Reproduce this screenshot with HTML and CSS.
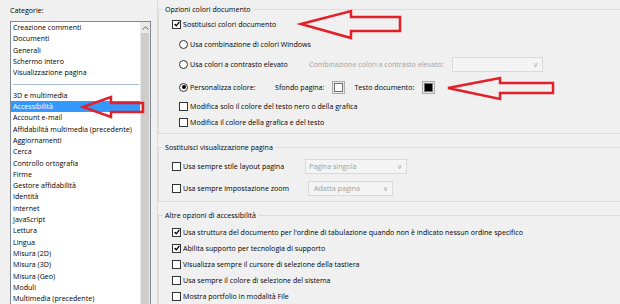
FILE: index.html
```html
<!DOCTYPE html>
<html>

<head>
    <title>Preferenze - Accessibilità</title>
    <link rel="stylesheet" href="styles.css">
</head>

<body>
    <div class="window">
        <div class="sidebar">
            <div class="sidebar-label">Categorie:</div>
            <div class="listbox">
                <ul class="list">
                    <li>Creazione commenti</li>
                    <li>Documenti</li>
                    <li>Generali</li>
                    <li>Schermo intero</li>
                    <li>Visualizzazione pagina</li>
                    <li class="separator"></li>
                    <li>3D e multimedia</li>
                    <li class="selected">Accessibilità</li>
                    <li>Account e-mail</li>
                    <li>Affidabilità multimedia (precedente)</li>
                    <li>Aggiornamenti</li>
                    <li>Cerca</li>
                    <li>Controllo ortografia</li>
                    <li>Firme</li>
                    <li>Gestore affidabilità</li>
                    <li>Identità</li>
                    <li>Internet</li>
                    <li>JavaScript</li>
                    <li>Lettura</li>
                    <li>Lingua</li>
                    <li>Misura (2D)</li>
                    <li>Misura (3D)</li>
                    <li>Misura (Geo)</li>
                    <li>Moduli</li>
                    <li>Multimedia (precedente)</li>
                </ul>
                <div class="scrollbar">
                    <div class="scroll-up">
                        <svg width="7" height="4" viewBox="0 0 7 4"><polyline points="0.5,3.5 3.5,0.8 6.5,3.5" fill="none" stroke="#606060" stroke-width="1"/></svg>
                    </div>
                    <div class="scroll-thumb"></div>
                </div>
            </div>
        </div>

        <div class="content">
            <fieldset class="group group-colors">
                <legend>Opzioni colori documento</legend>
                <div class="row">
                    <span class="check checked"><svg width="6" height="6" viewBox="0 0 6 6"><polyline points="0.6,3 2.3,4.8 5.4,0.8" fill="none" stroke="#000" stroke-width="1.3"/></svg></span>
                    <span>Sostituisci colori documento</span>
                </div>
                <div class="row indent gap-4">
                    <span class="radio"></span>
                    <span>Usa combinazione di colori Windows</span>
                </div>
                <div class="row indent gap-4">
                    <div class="option option-contrast">
                        <span class="radio"></span>
                        <span>Usa colori a contrasto elevato</span>
                    </div>
                    <span class="disabled label-contrast">Combinazione colori a contrasto elevato:</span>
                    <div class="dropdown dropdown-contrast"><span></span><span class="chevron">&#x2228;</span></div>
                </div>
                <div class="row indent gap-7">
                    <div class="option option-custom">
                        <span class="radio checked"></span>
                        <span>Personalizza colore:</span>
                    </div>
                    <span>Sfondo pagina:</span>
                    <span class="swatch swatch-page"><span class="swatch-inner swatch-white"></span></span>
                    <span>Testo documento:</span>
                    <span class="swatch swatch-text"><span class="swatch-inner swatch-black"></span></span>
                </div>
                <div class="row indent gap-3">
                    <span class="check"></span>
                    <span>Modifica solo il colore del testo nero o della grafica</span>
                </div>
                <div class="row indent">
                    <span class="check"></span>
                    <span>Modifica il colore della grafica e del testo</span>
                </div>
            </fieldset>

            <fieldset class="group group-view">
                <legend>Sostituisci visualizzazione pagina</legend>
                <div class="row">
                    <div class="option option-layout">
                        <span class="check"></span>
                        <span>Usa sempre stile layout pagina</span>
                    </div>
                    <div class="dropdown dropdown-layout"><span>Pagina singola</span><span class="chevron">&#x2228;</span></div>
                </div>
                <div class="row gap-6">
                    <div class="option option-zoom">
                        <span class="check"></span>
                        <span>Usa sempre impostazione zoom</span>
                    </div>
                    <div class="dropdown dropdown-zoom"><span>Adatta pagina</span><span class="chevron">&#x2228;</span></div>
                </div>
            </fieldset>

            <fieldset class="group group-other">
                <legend>Altre opzioni di accessibilità</legend>
                <div class="row">
                    <span class="check checked"><svg width="6" height="6" viewBox="0 0 6 6"><polyline points="0.6,3 2.3,4.8 5.4,0.8" fill="none" stroke="#000" stroke-width="1.3"/></svg></span>
                    <span>Usa struttura del documento per l'ordine di tabulazione quando non è indicato nessun ordine specifico</span>
                </div>
                <div class="row">
                    <span class="check checked"><svg width="6" height="6" viewBox="0 0 6 6"><polyline points="0.6,3 2.3,4.8 5.4,0.8" fill="none" stroke="#000" stroke-width="1.3"/></svg></span>
                    <span>Abilita supporto per tecnologia di supporto</span>
                </div>
                <div class="row">
                    <span class="check"></span>
                    <span>Visualizza sempre il cursore di selezione della tastiera</span>
                </div>
                <div class="row">
                    <span class="check"></span>
                    <span>Usa sempre il colore di selezione del sistema</span>
                </div>
                <div class="row">
                    <span class="check"></span>
                    <span>Mostra portfolio in modalità File</span>
                </div>
            </fieldset>
        </div>

        <!-- red arrows drawn over the screenshot -->
        <svg class="annotations" width="620" height="304" viewBox="0 0 620 304">
            <polygon points="301,24 351,11 351,17 400,17 400,31 351,31 351,38" />
            <polygon points="448,88 500,78 500,83 553,83 553,93 500,93 500,99" />
            <polygon points="83,107 111,97 111,103 143,103 143,112 111,112 111,117" />
        </svg>
    </div>
</body>

</html>
```

FILE: styles.css
```css
/* General */
html,
body {
    margin: 0;
    height: 100%;
    overflow: hidden;
}

* {
    box-sizing: border-box;
}

body {
    background-color: #f0f0f0;
    color: #000;
    font-family: "Open Sans", "Noto Sans", sans-serif;
    font-size: 7.1px;
}

.window {
    position: relative;
    display: flex;
    height: 304px;
    overflow: hidden;
}

/* Categories list */
.sidebar {
    width: 151px;
    padding-left: 10px;
    flex-shrink: 0;
    display: flex;
    flex-direction: column;
}

.sidebar-label {
    padding-top: 4px;
    line-height: 12px;
    margin-bottom: 5px;
}

.listbox {
    flex: 1;
    min-height: 0;
    overflow: hidden;
    display: flex;
    background: #fff;
    border: 1px solid #828790;
    border-bottom: 0;
}

.list {
    list-style: none;
    margin: 0;
    padding: 0;
    flex: 1;
}

.list li {
    height: 11.31px;
    line-height: 11.31px;
    padding-left: 2px;
    white-space: nowrap;
}

.list li.selected {
    background: #3399ff;
    color: #fff;
}

.list li.separator {
    position: relative;
}

.list li.separator::after {
    content: "";
    position: absolute;
    left: 2px;
    right: 1px;
    top: 6px;
    border-top: 1px solid #a7bcd3;
}

.scrollbar {
    width: 10px;
    background: #e8e8e8;
    display: flex;
    flex-direction: column;
}

.scroll-up {
    height: 11px;
    display: flex;
    align-items: center;
    justify-content: center;
}

.scroll-up svg {
    display: block;
}

.scroll-thumb {
    flex: 1;
    margin: 0 1px;
    background: #cdcdcd;
}

/* Options panel */
.content {
    flex: 1;
    margin-left: 6px;
    margin-right: -20px;
    border-left: 1px solid #dcdcdc;
    overflow: hidden;
}

.group {
    margin: 0;
    border: 1px solid #dcdcdc;
    padding: 0 0 0 13px;
}

.group legend {
    margin-left: -9px;
    padding: 0 2px;
    line-height: 12px;
}

.group-colors {
    margin-top: 3px;
    padding-top: 1px;
    padding-bottom: 3px;
}

.group-view {
    margin-top: 7px;
    padding-top: 5px;
    padding-bottom: 5px;
}

.group-other {
    margin-top: 7px;
    padding-top: 3px;
    padding-bottom: 0;
}

.row {
    display: flex;
    align-items: center;
    height: 16px;
    white-space: nowrap;
}

.row.indent {
    margin-left: 7px;
}

.gap-3 {
    margin-top: 3px;
}

.gap-4 {
    margin-top: 4px;
}

.gap-6 {
    margin-top: 6px;
}

.gap-7 {
    margin-top: 7px;
}

.option {
    display: flex;
    align-items: center;
    flex-shrink: 0;
}

.option-contrast {
    width: 130px;
}

.option-custom {
    width: 96px;
}

.option-layout {
    width: 133px;
}

.option-zoom {
    width: 136px;
}

/* Check boxes and radio buttons */
.check {
    width: 9px;
    height: 9px;
    border: 1px solid #333;
    background: #fff;
    margin-right: 2px;
    flex-shrink: 0;
    display: flex;
    align-items: center;
    justify-content: center;
}

.check svg {
    display: block;
}

.radio {
    width: 9px;
    height: 9px;
    border: 1px solid #333;
    border-radius: 50%;
    background: #fff;
    margin-right: 2px;
    flex-shrink: 0;
    position: relative;
}

.radio.checked::after {
    content: "";
    position: absolute;
    left: 1.5px;
    top: 1.5px;
    width: 4px;
    height: 4px;
    border-radius: 50%;
    background: #000;
}

.disabled {
    color: #a0a0a0;
}

.label-contrast {
    width: 143px;
}

/* Drop-down lists (disabled) */
.dropdown {
    display: flex;
    align-items: center;
    justify-content: space-between;
    height: 15px;
    border: 1px solid #d9d9d9;
    background: #f4f4f4;
    color: #a0a0a0;
    padding: 0 4px 0 3px;
}

.chevron {
    font-size: 7px;
    color: #a8a8a8;
}

.dropdown-contrast {
    width: 91px;
}

.dropdown-layout {
    width: 102px;
}

.dropdown-zoom {
    width: 85px;
    padding-left: 5px;
}

/* Colour swatches */
.swatch {
    width: 13px;
    height: 13px;
    border: 1px solid #adadad;
    background: #e9e9e9;
    display: flex;
    align-items: center;
    justify-content: center;
}

.swatch-page {
    margin: 0 9px 0 8px;
}

.swatch-text {
    margin-left: 8px;
}

.swatch-inner {
    width: 9px;
    height: 9px;
    border: 1px solid #707070;
}

.swatch-white {
    background: #fff;
}

.swatch-black {
    background: #000;
}

/* Annotations */
.annotations {
    position: absolute;
    left: 0;
    top: 0;
    pointer-events: none;
}

.annotations polygon {
    fill: none;
    stroke: #e3202a;
    stroke-width: 2.5;
    stroke-linejoin: miter;
}
```
